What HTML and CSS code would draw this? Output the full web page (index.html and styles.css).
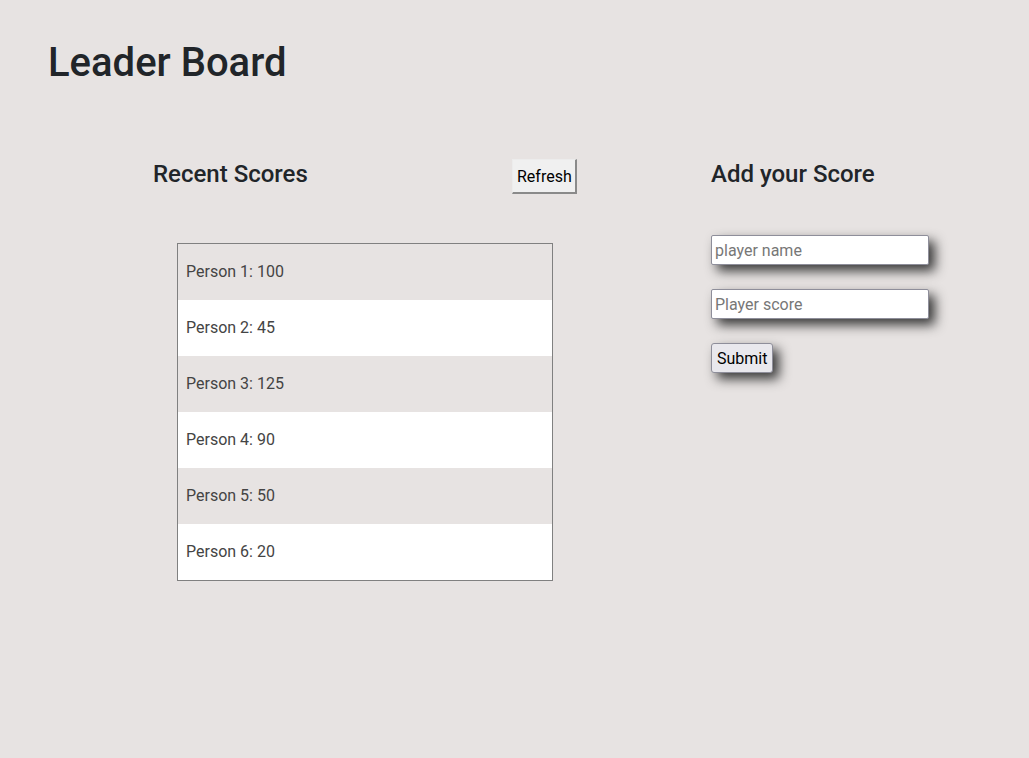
FILE: index.html
```html
<!DOCTYPE html>
<html>
<head>
<meta charset="utf-8">
<link rel="stylesheet" href="styles.css">
</head>
<body>
<header class="top">
  <h1 class="title">Leader Board</h1>
</header>
<main class="main">
  <section class="scores">
    <div class="scores-head">
      <h2 class="heading">Recent Scores</h2>
      <button class="refresh" type="button">Refresh</button>
    </div>
    <ul class="list">
      <li class="row">Person 1: 100</li>
      <li class="row">Person 2: 45</li>
      <li class="row">Person 3: 125</li>
      <li class="row">Person 4: 90</li>
      <li class="row">Person 5: 50</li>
      <li class="row">Person 6: 20</li>
    </ul>
  </section>
  <section class="add">
    <h2 class="heading">Add your Score</h2>
    <form class="form">
      <input class="field" type="text" placeholder="player name">
      <input class="field" type="text" placeholder="Player score">
      <button class="submit" type="button">Submit</button>
    </form>
  </section>
</main>
</body>
</html>
```

FILE: styles.css
```css
* { box-sizing: border-box; }
html, body {
  margin: 0;
  background: #e7e3e2;
  font-family: Roboto, "Noto Sans", sans-serif;
  color: #212529;
}
.top {
  padding: 39px 0 0 48px;
}
.title {
  margin: 0;
  font-size: 40px;
  font-weight: 500;
  line-height: 48px;
}
.main {
  display: flex;
  padding: 72px 0 0 153px;
  gap: 134px;
}
.scores {
  width: 424px;
}
.scores-head {
  display: flex;
  justify-content: space-between;
  align-items: flex-start;
}
.heading {
  margin: 0;
  font-size: 24px;
  font-weight: 500;
  line-height: 31px;
}
.refresh {
  margin-top: 0;
  height: 35px;
  width: 65px;
  padding: 0 3px 0 4px;
  font-family: Roboto, sans-serif;
  font-size: 16px;
  text-align: left;
  color: #000;
  background: #f0f0f0;
  border-width: 1px 2px 2px 1px;
  border-style: solid;
  border-color: #ececec #8a8a8a #8a8a8a #ececec;
}
.list {
  list-style: none;
  margin: 49px 0 0 24px;
  padding: 0;
  width: 376px;
  border: 1px solid #808080;
}
.row {
  height: 56px;
  line-height: 56px;
  padding-left: 8px;
  font-size: 16px;
  color: #444;
}
.row:nth-child(odd) { background: #e7e3e2; }
.row:nth-child(even) { background: #fff; }
.add {
  display: flex;
  flex-direction: column;
}
.form {
  display: flex;
  flex-direction: column;
  align-items: flex-start;
  gap: 24px;
  margin-top: 45px;
}
.field {
  width: 218px;
  height: 30px;
  padding: 0 3px;
  font-family: Roboto, sans-serif;
  font-size: 16px;
  border: 1px solid #8e8e9a;
  border-radius: 2px;
  background: #fff;
  box-shadow: 6px 6px 12px #3a3a3a;
}
.field::placeholder { color: #777; }
.submit {
  height: 30px;
  padding: 0 5px;
  font-family: Roboto, sans-serif;
  font-size: 16px;
  color: #000;
  background: #e9e8ed;
  border: 1px solid #8e8e9a;
  border-radius: 3px;
  box-shadow: 6px 6px 12px #3a3a3a;
}
```
